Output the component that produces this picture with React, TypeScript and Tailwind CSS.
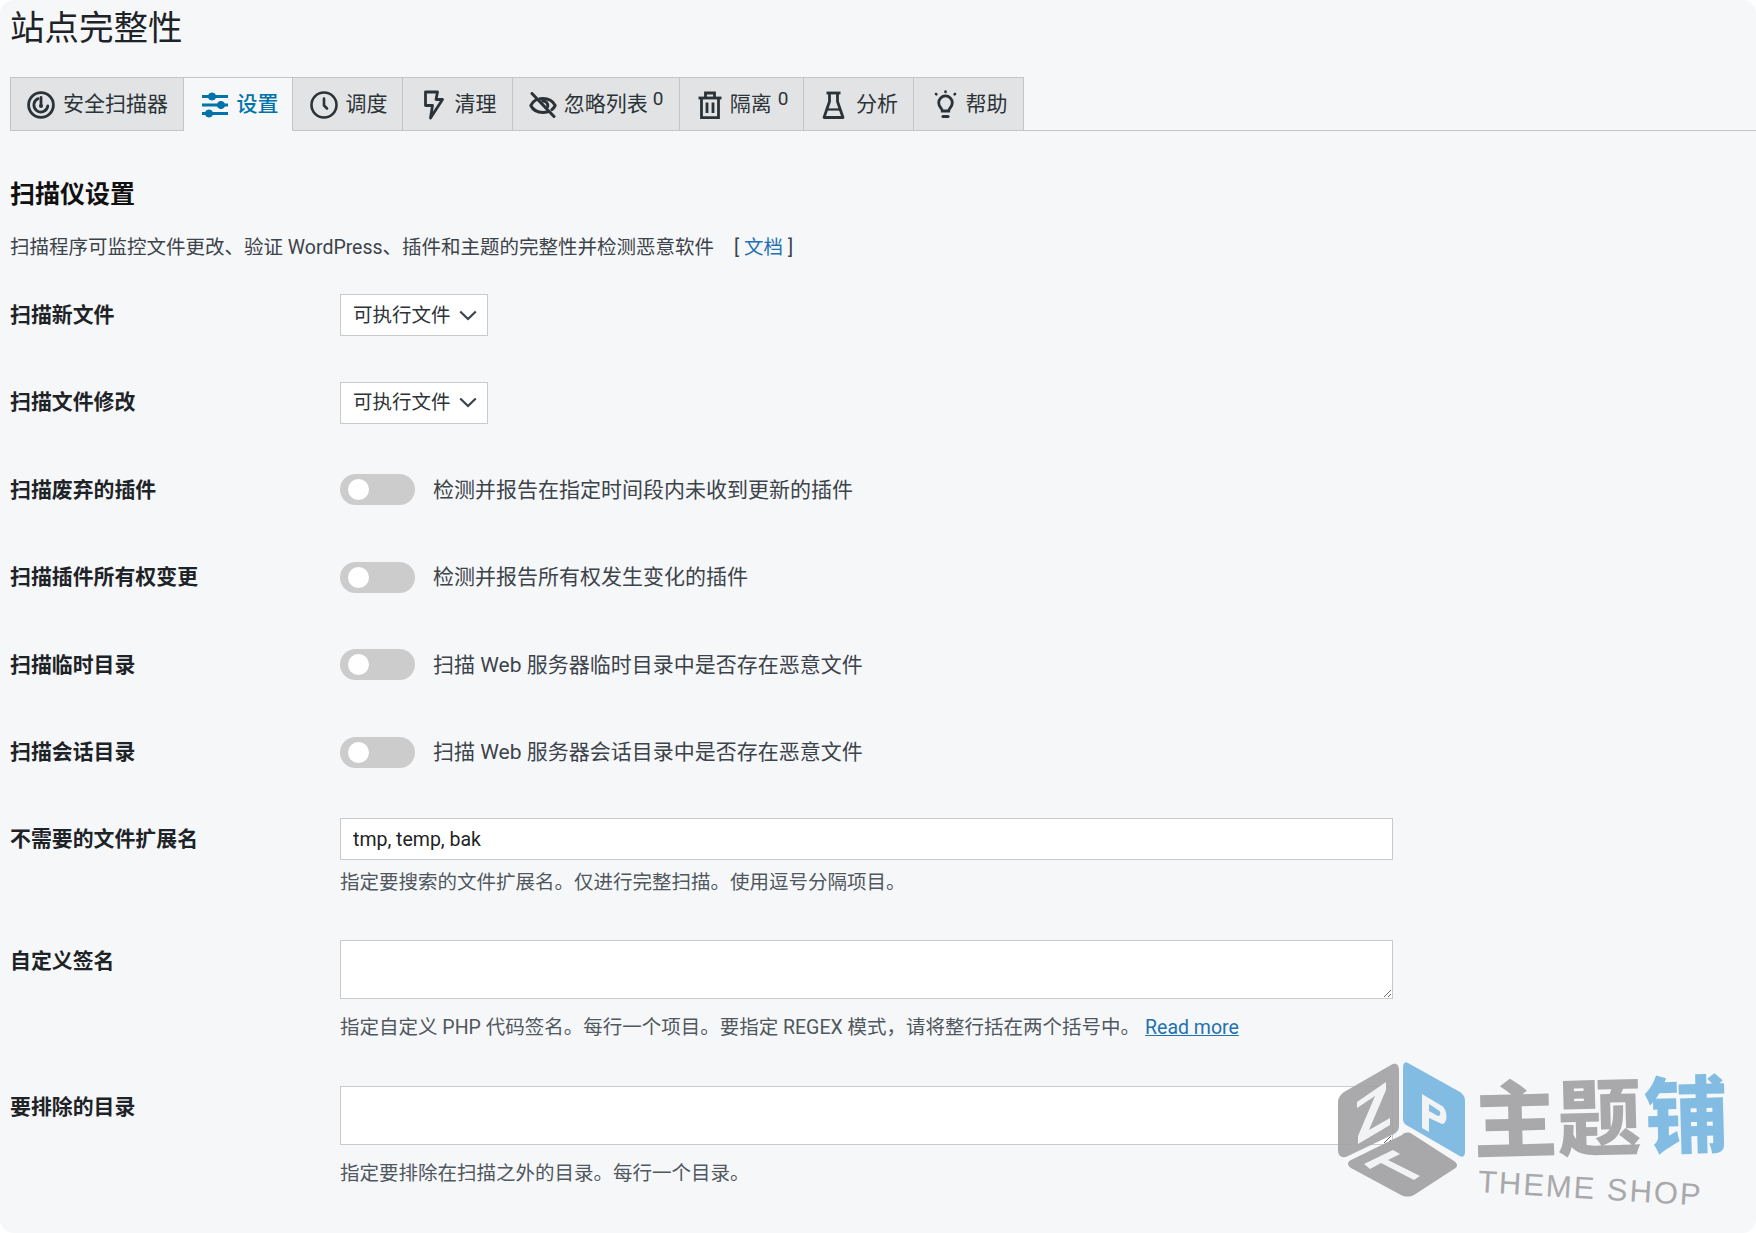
import React from 'react';

const cjk = "font-['Roboto','Noto_Sans_CJK_SC',sans-serif]";

function ScannerIcon() {
    return (
        <svg width="28" height="28" viewBox="0 0 28 28" fill="none" stroke="currentColor" strokeWidth="2.8" strokeLinecap="round">
            <circle cx="14" cy="14" r="12.400" />
            <path d="M11 7.600a7 7 0 1 0 9.800 7.400" />
            <path d="M14 6.500v8.500" />
            <circle cx="14" cy="15" r="2" fill="currentColor" stroke="none" />
        </svg>
    );
}

function SlidersIcon() {
    return (
        <svg width="28" height="26" viewBox="0 0 28 26" fill="currentColor" stroke="currentColor" strokeWidth="3">
            <path d="M1 4.500h26M1 13h26M1 21.500h26" fill="none" />
            <circle cx="11" cy="4.500" r="3.600" strokeWidth="1" />
            <circle cx="20" cy="13" r="3.600" strokeWidth="1" />
            <circle cx="8" cy="21.500" r="3.600" strokeWidth="1" />
        </svg>
    );
}

function ClockIcon() {
    return (
        <svg width="28" height="28" viewBox="0 0 28 28" fill="none" stroke="currentColor" strokeWidth="2.6" strokeLinecap="round" strokeLinejoin="round">
            <circle cx="14" cy="14" r="12.500" />
            <path d="M14 7.500v7l3 3" />
        </svg>
    );
}

function BoltIcon() {
    return (
        <svg width="22" height="30" viewBox="0 0 22 30" fill="none" stroke="currentColor" strokeWidth="2.800" strokeLinejoin="round">
            <path d="M3.500 2h12l-1.500 7.500H20.500L8.500 28l2-12.500H3.500z" />
        </svg>
    );
}

function EyeOffIcon() {
    return (
        <svg width="28" height="26" viewBox="0 0 28 26" fill="none" stroke="currentColor" strokeWidth="3" strokeLinecap="round" strokeLinejoin="round">
            <path d="M7.500 7.500C4.800 9 2.800 11.200 1.800 13.500 4 18 8.500 20.500 14 20.500c1.700 0 3.300-.3 4.700-.7" />
            <path d="M11 6.800c1-.2 2-.3 3-.3 5.500 0 10 2.800 12.200 7-.8 1.600-2 3-3.300 4.200" />
            <path d="M18.800 14.500a4.800 4.800 0 0 0-5-5.500" />
            <path d="M3 1.500l22 23" />
        </svg>
    );
}

function TrashIcon() {
    return (
        <svg width="24" height="28" viewBox="0 0 24 28" fill="none" stroke="currentColor" strokeWidth="2.800">
            <path d="M0.500 7h23" />
            <path d="M7.500 7V2h9V7" />
            <path d="M3.500 7v19.600h17V7" />
            <path d="M9 11.500v10.500M15 11.500v10.500" />
        </svg>
    );
}

function FlaskIcon() {
    return (
        <svg width="23" height="28" viewBox="0 0 23 28" fill="none" stroke="currentColor" strokeWidth="2.800" strokeLinejoin="round">
            <path d="M4.500 2h14" />
            <path d="M7.500 2v8.500L2 26.500h19L15.500 10.500V2" />
            <path d="M4.500 18.500h14" strokeWidth="2.200" />
        </svg>
    );
}

function BulbIcon() {
    return (
        <svg width="25" height="30" viewBox="0 0 25 30" fill="none" stroke="currentColor" strokeWidth="2.800" strokeLinecap="round">
            <path d="M9.300 21c0-2.700-3.600-4-3.600-8.300a6.800 6.800 0 0 1 13.600 0c0 4.300-3.600 5.600-3.600 8.300z" />
            <path d="M10 26.500h5" strokeWidth="3.200" />
            <path d="M12.500 1.500v.5M3 4l.4.4M22 4l-.4.4" strokeWidth="2.600" />
        </svg>
    );
}

function Chevron() {
    return (
        <svg width="18" height="11" viewBox="0 0 18 11" fill="none" stroke="#3c434a" strokeWidth="2.200">
            <path d="M1.200 1.500L9 9l7.800-7.500" />
        </svg>
    );
}

const tabs = [
    { label: '安全扫描器', w: 'w-[174px] pl-[1px]', icon: <ScannerIcon />, gap: 'gap-[8px]' },
    { label: '设置', w: 'w-[109px] pl-[3px]', icon: <SlidersIcon />, active: true, gap: 'gap-[8px]' },
    { label: '调度', w: 'w-[110px] pl-[2px]', icon: <ClockIcon />, gap: 'gap-[8px]' },
    { label: '清理', w: 'w-[110px] pl-[3px]', icon: <BoltIcon />, gap: 'gap-[11px]' },
    { label: '忽略列表', w: 'w-[167px]', icon: <EyeOffIcon />, count: 0, gap: 'gap-[7px]' },
    { label: '隔离', w: 'w-[124px] pl-[3px]', icon: <TrashIcon />, count: 0, gap: 'gap-[8px]' },
    { label: '分析', w: 'w-[110px] pl-[3px]', icon: <FlaskIcon />, gap: 'gap-[11px]' },
    { label: '帮助', w: 'w-[110px] pl-[3px]', icon: <BulbIcon />, gap: 'gap-[8px]' },
];

function Tabs() {
    return (
        <div className="-mr-[10px] flex h-[54px] border-b border-[#c3c4c7]">
            {tabs.map((t) => (
                <div
                    key={t.label}
                    className={`${t.w} ${t.gap} flex h-[54px] shrink-0 items-center justify-center border border-l-0 pt-[2px] first:border-l text-[21px] ${
                        t.active
                            ? 'border-[#c3c4c7] border-b-[#f6f7f9] bg-[#f6f7f9] font-medium text-[#0073aa]'
                            : 'border-[#c3c4c7] bg-[#e2e3e5] text-[#2c3338]'
                    }`}
                >
                    {t.icon}
                    <span>{t.label}</span>
                    {t.count !== undefined && <span className="ml-[-2px] -translate-y-[7px] text-[19px] leading-none">{t.count}</span>}
                </div>
            ))}
        </div>
    );
}

function SelectBox() {
    return (
        <div className="flex h-[42px] w-[148px] items-center justify-between border border-[#c9cacc] bg-white pl-[12px] pr-[10px] text-[19.500px] text-[#2c3338]">
            <span>可执行文件</span>
            <Chevron />
        </div>
    );
}

function Toggle({ text }: { text: string }) {
    return (
        <div className="flex items-center gap-[18px]">
            <div className="flex h-[31px] w-[75px] items-center rounded-full bg-[#cccccc] pl-[8px]">
                <div className="h-[21px] w-[21px] rounded-full bg-white"></div>
            </div>
            <span className="pt-[1px] text-[21px] text-[#3c434a]">{text}</span>
        </div>
    );
}

function Row({ label, children }: { label: string; children: React.ReactNode }) {
    return (
        <div className="flex h-[87.400px] items-center">
            <div className="w-[330px] shrink-0 pt-[1px] text-[20.900px] font-bold text-[#1d2327]">{label}</div>
            {children}
        </div>
    );
}

function TextareaBlock({ label, help }: { label: string; help: React.ReactNode }) {
    return (
        <div className="flex">
            <div className="w-[330px] shrink-0 pt-[7.500px] text-[20.900px] font-bold leading-[28px] text-[#1d2327]">{label}</div>
            <div className="w-[1053px]">
                <textarea className="block h-[59px] w-full border border-[#c9cacc] bg-white" />
                <p className="mt-[15px] h-[28px] text-[19.500px] leading-[28px] text-[#50575e]">{help}</p>
            </div>
        </div>
    );
}

// watermark over the corner of the page, the logo is a drawing and the words stay text
function Watermark() {
    return (
        <div className="pointer-events-none absolute left-[1338px] top-[1060px] h-[145px] w-[395px]">
            <svg className="absolute left-0 top-0" width="134" height="140" viewBox="0 0 134 140">
                <path d="M53 5C58 2 61 5 61 10V66C61 70 59 72 56 74L10 96C4 99 0 96 0 90V42C0 38 2 35 6 32Z" fill="#a3a3a5" fillOpacity="0.92" />
                <path d="M70 3L122 32C126 35 127 37 127 42V92C127 97 124 98 120 95L70 66C66 64 65 62 65 58V8C65 3 67 1 70 3Z" fill="#82bce2" />
                <path d="M64 75C67 72 71 72 74 74L116 101C120 104 120 107 116 109L76 135C72 137 67 137 63 135L13 108C9 105 9 102 13 100Z" fill="#a8a8aa" />
                <path d="M19 42L48 22V30L31 70L52 58V65L20 84V76L37 36L19 48Z" fill="#f2f3f5" />
                <path fillRule="evenodd" d="M84 34L104 46C110 50 110 64 104 64L91 58V72L84 68ZM91 44V51L100 56C103 56 103 51 100 50Z" fill="#f2f3f5" />
                <path d="M26 104L55 90L62 94L50 100L82 116L76 120L43 103L32 109Z" fill="#f2f3f5" />
            </svg>
            <div className="absolute left-[135px] top-[17px] flex origin-left rotate-[-1.500deg] font-['Noto_Sans_CJK_SC',sans-serif] text-[84px] font-black leading-[78px]">
                <span className="text-[#a9a9ab]">主题</span>
                <span className="ml-[3px] text-[#82bce2]">铺</span>
            </div>
            <div className="absolute left-[140px] top-[105px] origin-left rotate-[3.500deg] font-['Liberation_Sans',sans-serif] text-[31px] leading-[34px] tracking-[2px] text-[#a9a9ab]">
                THEME SHOP
            </div>
        </div>
    );
}

export default function App() {
    return (
        <div className={`${cjk} relative h-[1233px] w-[1756px] overflow-hidden bg-white`}>
            <div className="h-full rounded-[14px] bg-[#f6f7f9] px-[10px]">
                <h1 className="flex h-[56px] items-center text-[34.500px] font-normal leading-none text-[#1d2327]">站点完整性</h1>
                <div className="h-[21px]"></div>
                <Tabs />

                <h2 className="mt-[45px] text-[25px] font-bold leading-[38px] text-[#111111]">扫描仪设置</h2>
                <p className="mt-[20px] text-[19.500px] leading-[28px] text-[#3c434a]">
                    扫描程序可监控文件更改、验证 WordPress、插件和主题的完整性并检测恶意软件
                    <span className="ml-[20px]">
                        [ <span className="text-[#2271b1]">文档</span> ]
                    </span>
                </p>

                <div className="mt-[9.500px]">
                    <Row label="扫描新文件"><SelectBox /></Row>
                    <Row label="扫描文件修改"><SelectBox /></Row>
                    <Row label="扫描废弃的插件"><Toggle text="检测并报告在指定时间段内未收到更新的插件" /></Row>
                    <Row label="扫描插件所有权变更"><Toggle text="检测并报告所有权发生变化的插件" /></Row>
                    <Row label="扫描临时目录"><Toggle text="扫描 Web 服务器临时目录中是否存在恶意文件" /></Row>
                    <Row label="扫描会话目录"><Toggle text="扫描 Web 服务器会话目录中是否存在恶意文件" /></Row>
                </div>

                <div className="mt-[22px] flex">
                    <div className="w-[330px] shrink-0 pt-[7px] text-[20.900px] font-bold leading-[28px] text-[#1d2327]">不需要的文件扩展名</div>
                    <div className="w-[1053px]">
                        <input
                            readOnly
                            value="tmp, temp, bak"
                            className="block h-[42px] w-full border border-[#c9cacc] bg-white px-[12px] pt-[1px] text-[19.500px] text-[#1d2327]"
                        />
                        <p className="mt-[9px] h-[28px] text-[19.500px] leading-[28px] text-[#50575e]">指定要搜索的文件扩展名。仅进行完整扫描。使用逗号分隔项目。</p>
                    </div>
                </div>

                <div className="mt-[43px]">
                    <TextareaBlock
                        label="自定义签名"
                        help={
                            <>
                                指定自定义 PHP 代码签名。每行一个项目。要指定 REGEX 模式，请将整行括在两个括号中。
                                <a className="ml-[5px] text-[#2271b1] underline">Read more</a>
                            </>
                        }
                    />
                </div>
                <div className="mt-[44px]">
                    <TextareaBlock label="要排除的目录" help="指定要排除在扫描之外的目录。每行一个目录。" />
                </div>
            </div>
            <Watermark />
        </div>
    );
}
